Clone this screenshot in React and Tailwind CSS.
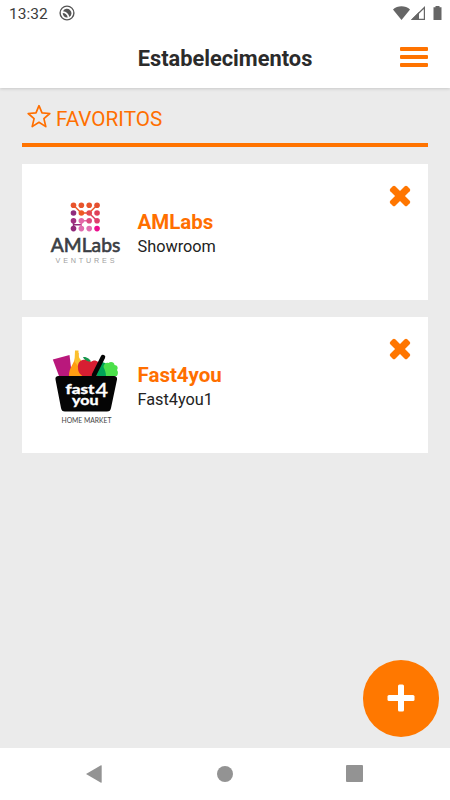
import React from "react";

const STORES = [
  { id: 1, name: "AMLabs", branch: "Showroom", Logo: AMLabsLogo },
  { id: 2, name: "Fast4you", branch: "Fast4you1", Logo: Fast4youLogo },
];

// Dot grid colours, row by row
const DOTS = [
  ["#e8542c", "#e8542c", "#e8542c", "#e5502f"],
  ["#8f2c7c", "#ee5a24", "#e34850", "#e04058"],
  ["#a02f80", "#e268a8", "#dc4a80", "#dd3f6c"],
  ["#92297a", "#e06cb0", "#e06cb0", "#ec0c8c"],
];

function AMLabsLogo() {
  return (
    <svg className="h-[100px] w-[80px] shrink-0" viewBox="0 0 80 100">
      <g strokeWidth="1.4" fill="none">
        <path d="M27.5 24.2 35.3 32H43L51 24.2" stroke="#ec5828" />
        <path d="M51 39.8 43 32" stroke="#e04058" />
        <path d="M27.5 39.8V47.6M27.5 43.7H35.3" stroke="#92297a" />
        <path d="M35.3 47.6V39.8H43" stroke="#e268a8" />
      </g>
      {DOTS.map((row, y) =>
        row.map((fill, x) => (
          <circle key={`${x}-${y}`} cx={27.5 + x * 7.85} cy={24.2 + y * 7.8} r="2.8" fill={fill} />
        ))
      )}
      <text
        x="4.8"
        y="71"
        textLength="69.5"
        lengthAdjust="spacingAndGlyphs"
        fill="#3b3e44"
        stroke="#3b3e44"
        strokeWidth="0.6"
        className="font-['Lato',sans-serif] text-[18.5px]"
      >
        AMLabs
      </text>
      <text
        x="9.5"
        y="81.7"
        textLength="59"
        fill="#a0a0a0"
        className="font-['Liberation_Sans',sans-serif] text-[7.2px]"
      >
        VENTURES
      </text>
    </svg>
  );
}

function Fast4youLogo() {
  return (
    <svg className="h-[100px] w-[80px] shrink-0" viewBox="0 0 80 100">
      {/* groceries */}
      <path d="M6.800 25.500 23.500 21 26 42H13Z" fill="#b9187c" />
      <path d="M29 19h3.600v6c1 4 4 5 4.500 11v6H23c0-9 5-12 6-18Z" fill="#ff9c12" />
      <path d="M29 16.500h3.500v5c1 5 5 5 5 11l-3 3-6-8Z" fill="#fbc02d" />
      <path d="M45 28c-5-4-14-3-13 6 0 5 3 7 6 9h14V28c-2-2-5-2-7 0Z" fill="#d71e32" />
      <path d="M45 27.500c-1-2-4-5-8-4.500 1 3 5 5 8 4.500Z" fill="#15964c" />
      <path d="M55 28c-5 3-6 13-4 14h17c0-7-5-13-13-14Z" fill="#00a458" />
      <path
        d="M60 42c0-3-1-6-2.500-9 0-3 3-5 5-4 2-2 6-1 6 2 3 0 4 3 2.500 5 1.500 2 1 4 0 6Z"
        fill="#4be04a"
      />
      {/* basket */}
      <path d="M57 23 48 41" stroke="#050505" strokeWidth="4.500" strokeLinecap="round" />
      <path
        d="M12.500 42h55.500c2 0 3.500 1.500 3 3.500l-6 28.500c-.5 2.500-1.500 3.500-4 3.500h-42c-2.500 0-3.500-1-4-3.500L9.500 45.500c-.4-2 .8-3.500 3-3.500Z"
        fill="#050505"
      />
      <g fill="#fff" className="font-['Lato',sans-serif] font-bold" stroke="#fff" strokeWidth="0.400">
        <text x="19.500" y="60" textLength="29" lengthAdjust="spacingAndGlyphs" className="text-[14px]">
          fast
        </text>
        <text x="26" y="70.500" textLength="26.500" lengthAdjust="spacingAndGlyphs" className="text-[14px]">
          you
        </text>
      </g>
      <text
        x="49.500"
        y="62.500"
        textLength="12.500"
        lengthAdjust="spacingAndGlyphs"
        fill="#fff"
        stroke="#fff"
        strokeWidth="0.500"
        className="font-['Lato',sans-serif] text-[20px]"
      >
        4
      </text>
      <text
        x="15.500"
        y="88.500"
        textLength="50"
        lengthAdjust="spacingAndGlyphs"
        fill="#444"
        className="font-['Lato',sans-serif] text-[7px]"
      >
        HOME MARKET
      </text>
    </svg>
  );
}

function StatusBar() {
  return (
    <div className="flex h-7 items-center pl-[9px] pr-2">
      <span className="pt-0.5 text-[15.5px] leading-none text-[#3c3c3c]">13:32</span>
      <svg className="ml-[11px] h-4 w-4 -translate-y-px" viewBox="0 0 16 16">
        <circle cx="8" cy="8" r="6.900" fill="none" stroke="#555" strokeWidth="1.400" />
        <path d="M4 6.200a4.500 4.500 0 1 1 6.500 5.800C9.500 8.500 7.500 6.500 4 6.200Z" fill="#555" />
        <path d="M3.700 8c2.500 0 4.500 1.700 5 4.400C6 12.800 3.700 11 3.700 8Z" fill="#555" />
      </svg>
      <div className="ml-auto flex -translate-y-px items-center">
        <svg className="h-[14px] w-[17px]" viewBox="0 0 17 14">
          <path d="M0 3.500C4.500-.7 12.500-.7 17 3.500L8.500 14Z" fill="#666" />
        </svg>
        <svg className="ml-[1px] h-[14px] w-[15px]" viewBox="0 0 15 14">
          <path d="M1.500 13.300 13.400 1.500v11.800Z" fill="none" stroke="#666" strokeWidth="1.200" />
          <path d="M0 14 8 6v8Z" fill="#666" />
        </svg>
        <svg className="ml-[7px] h-[14px] w-[9px]" viewBox="0 0 9 14">
          <path d="M2.500 0h4v1.300H8.500V14H.5V1.300h2Z" fill="#666" />
        </svg>
      </div>
    </div>
  );
}

function Header() {
  return (
    <header className="relative bg-white shadow-[0_1px_3px_rgba(0,0,0,0.15)]">
      <StatusBar />
      <div className="grid h-[59.5px] grid-cols-[1fr_auto_1fr] items-center px-[22px]">
        <h1 className="col-start-2 pt-0.5 text-[21.8px] font-bold leading-none text-[#2b2b2b]">
          Estabelecimentos
        </h1>
        <button className="flex flex-col gap-1 justify-self-end -translate-y-px" aria-label="Menu">
          <span className="h-1 w-7 rounded-[1px] bg-[#ff7300]" />
          <span className="h-1 w-7 rounded-[1px] bg-[#ff7300]" />
          <span className="h-1 w-7 rounded-[1px] bg-[#ff7300]" />
        </button>
      </div>
    </header>
  );
}

function StoreCard({ name, branch, Logo }) {
  return (
    <li className="flex h-[136.5px] items-start bg-white">
      <div className="ml-6 mt-[17px]">
        <Logo />
      </div>
      <div className="ml-[11.5px] mt-[46px]">
        <h3 className="text-[20.5px] font-bold leading-6 text-[#ff6f00]">{name}</h3>
        <p className="pt-px text-[16.3px] leading-6 text-[#222]">{branch}</p>
      </div>
      <button className="ml-auto mr-[17px] mt-[21.5px]" aria-label="Remover">
        <svg className="h-[22px] w-[22px]" viewBox="0 0 22 22" fill="#ff7600">
          <rect x="-1" y="7.500" width="24" height="7" rx="1.800" transform="rotate(45 11 11)" />
          <rect x="-1" y="7.500" width="24" height="7" rx="1.800" transform="rotate(-45 11 11)" />
        </svg>
      </button>
    </li>
  );
}

function NavBar() {
  return (
    <nav className="grid h-[52.5px] grid-cols-3 items-center bg-white px-[29px] text-[#939393]">
      <svg className="h-[18px] w-4 justify-self-center" viewBox="0 0 16 18" fill="currentColor">
        <path d="M0 9 15 .3c.4-.2.700 0 .700.400v16.600c0 .4-.3.6-.7.4Z" />
      </svg>
      <span className="h-4 w-4 justify-self-center rounded-full bg-current" />
      <span className="mr-0.5 h-[17px] w-[17px] justify-self-center rounded-[1px] bg-current" />
    </nav>
  );
}

export default function App() {
  return (
    <div className="flex h-[800px] w-[450px] flex-col overflow-hidden bg-[#ebebeb] font-['Roboto',sans-serif]">
      <Header />
      <main className="relative flex-1 px-[22px]">
        <h2 className="flex h-[59.5px] items-center border-b-4 border-[#ff7300] pl-[5px] pt-2 text-[20.7px] text-[#ff6f00]">
          <svg
            className="h-6 w-6 -translate-y-[2.5px]"
            viewBox="0 0 24 24"
            fill="none"
            stroke="currentColor"
            strokeWidth="1.700"
            strokeLinejoin="round"
          >
            <path d="m12 1.200 3 7.200 7.800.600-5.900 5.100 1.900 8L12 17.800 5.200 22.100l1.900-8L1.200 9 9 8.400Z" />
          </svg>
          <span className="ml-[5px] leading-none">FAVORITOS</span>
        </h2>
        <ul className="mt-[16.5px] flex flex-col gap-[16.5px]">
          {STORES.map((store) => (
            <StoreCard key={store.id} {...store} />
          ))}
        </ul>
        {/* floating add button */}
        <button
          className="absolute bottom-[11px] right-[11px] flex h-[76.5px] w-[76.5px] items-center justify-center rounded-full bg-[#ff7800]"
          aria-label="Adicionar"
        >
          <svg className="h-7 w-7" viewBox="0 0 28 28" fill="#fff">
            <rect x="0.500" y="11" width="27" height="6" rx="1.500" />
            <rect x="11" y="0.500" width="6" height="27" rx="1.500" />
          </svg>
        </button>
      </main>
      <NavBar />
    </div>
  );
}
